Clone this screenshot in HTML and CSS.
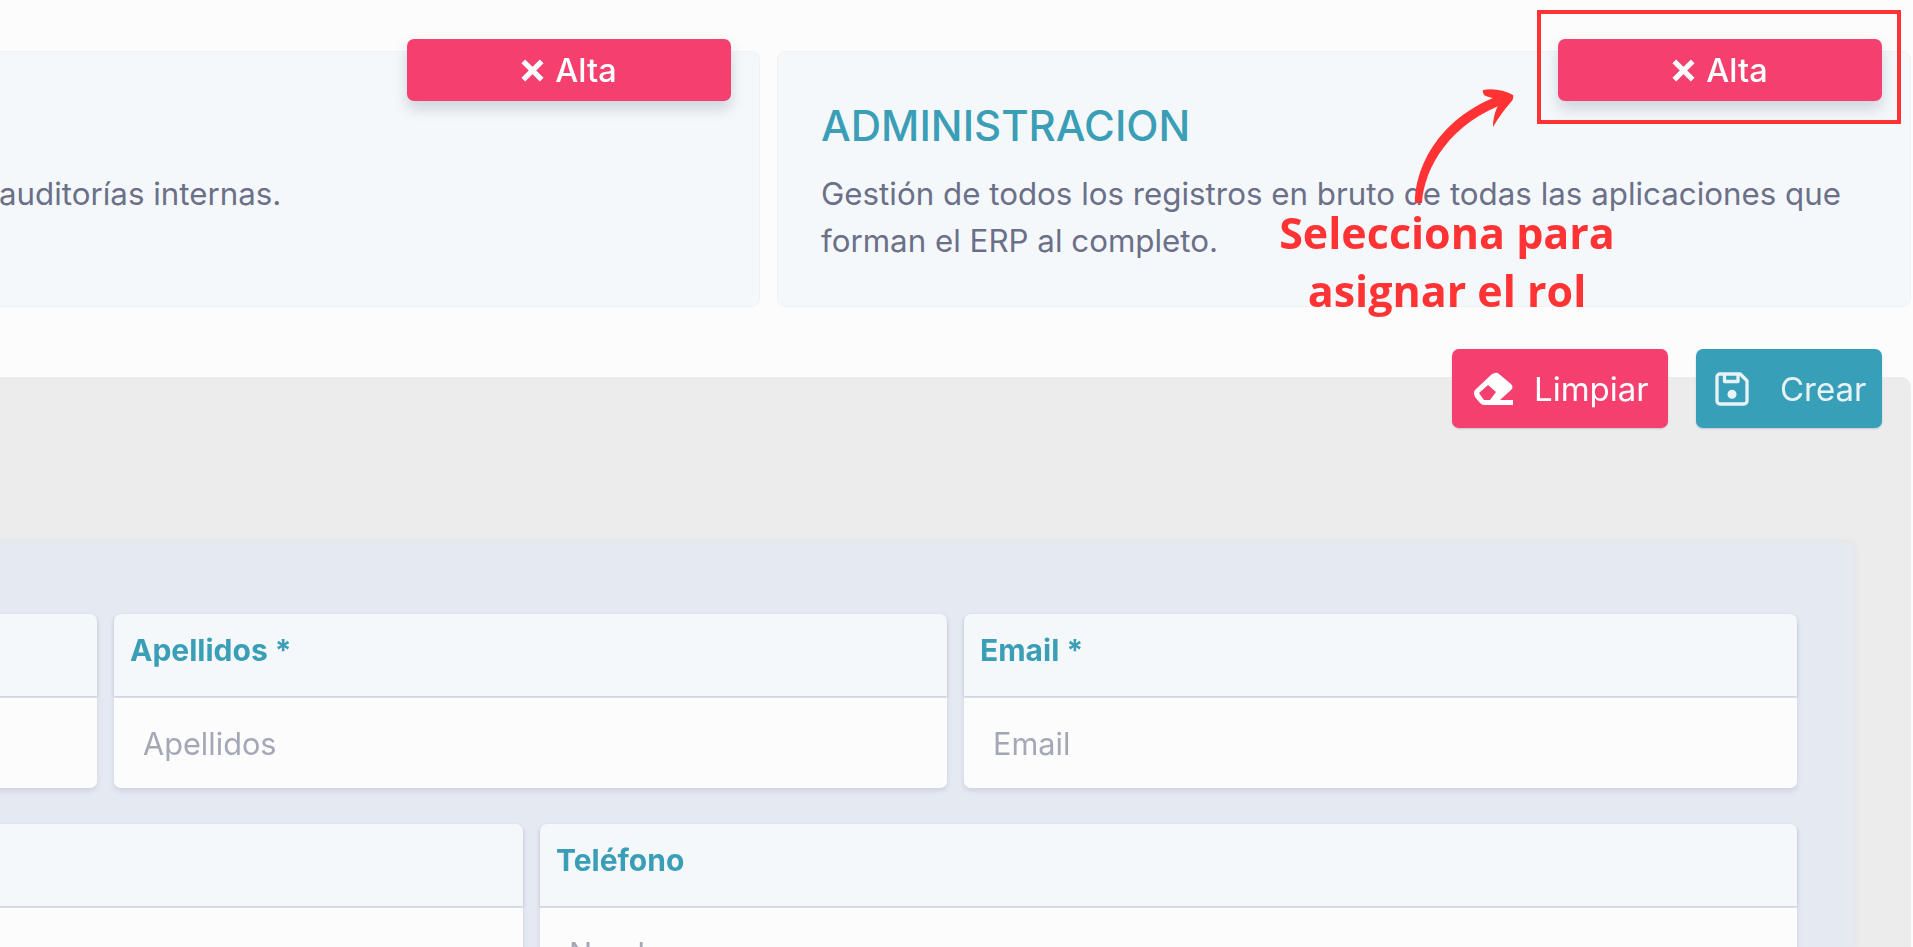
FILE: index.html
```html
<!DOCTYPE html>
<html lang="es">
<head>
<meta charset="utf-8">
<title>Alta de usuario</title>
<link rel="stylesheet" href="styles.css">
</head>
<body>
<div class="app">
  <section class="roles">
    <article class="role role-left">
      <button class="btn-alta" type="button"><svg class="x" viewBox="0 0 20 20"><path d="M2 2 18 18M18 2 2 18"/></svg><span>Alta</span></button>
      <h2 class="role-title">&nbsp;</h2>
      <p class="role-text">auditorías internas.</p>
    </article>
    <article class="role role-right">
      <button class="btn-alta" type="button"><svg class="x" viewBox="0 0 20 20"><path d="M2 2 18 18M18 2 2 18"/></svg><span>Alta</span></button>
      <h2 class="role-title">ADMINISTRACION</h2>
      <p class="role-text">Gestión de todos los registros en bruto de todas las aplicaciones que forman el ERP al completo.</p>
    </article>
  </section>
  <section class="panel">
    <div class="actions">
      <button class="btn btn-pink" type="button">
        <svg class="ico-eraser" viewBox="0 0 40 33"><path fill="#fff" fill-rule="evenodd" d="M22 1Q24 0 26 2L38 12Q41 15 38 18L27 28H40V33H11Q9 33 7 31L2 25Q0 21 2 18L19 2ZM6 21 15 13 23 20 17 28H11Z"/></svg>
        <span>Limpiar</span>
      </button>
      <button class="btn btn-teal" type="button">
        <svg class="ico-save" viewBox="0 0 24 24"><g fill="none" stroke="#e9f3f7" stroke-width="2.200" stroke-linejoin="round"><path d="M4 2h13.500L22 6.500V20a2 2 0 0 1-2 2H4a2 2 0 0 1-2-2V4a2 2 0 0 1 2-2Z"/><path d="M7 2.500v4.500h9V2.500"/></g><circle cx="12" cy="15.500" r="3" fill="#e9f3f7"/></svg>
        <span>Crear</span>
      </button>
    </div>
    <form class="form">
      <div class="row row-top">
        <div class="field">
          <div class="field-head">&nbsp;</div>
          <div class="field-body">&nbsp;</div>
        </div>
        <div class="field">
          <div class="field-head">Apellidos *</div>
          <div class="field-body">Apellidos</div>
        </div>
        <div class="field">
          <div class="field-head">Email *</div>
          <div class="field-body">Email</div>
        </div>
      </div>
      <div class="row row-bottom">
        <div class="field">
          <div class="field-head">&nbsp;</div>
          <div class="field-body">&nbsp;</div>
        </div>
        <div class="field">
          <div class="field-head">Teléfono</div>
          <div class="field-body">Nombre</div>
        </div>
      </div>
    </form>
  </section>
</div>
<div class="frame"></div>
<svg class="arrow" viewBox="0 0 130 130">
  <path fill="#ff3333" d="M15 123C15 86 40 35 106 13L109 22C50 42 24 88 22 123Z"/>
  <path fill="#ff3333" d="M83 10C93 8 104 10 113 15Q114 19 111 22C104 30 98 38 93 47C93 37 96 28 101 20C95 18 89 18 84 15Q82 12 83 10Z"/>
</svg>
<p class="note">Selecciona para<br>asignar el rol</p>
</body>
</html>
```
FILE: styles.css
```css
* { box-sizing: border-box; }
html, body { margin: 0; height: 100%; }
body {
  width: 1913px;
  height: 947px;
  overflow: hidden;
  background: #fcfcfc;
  font-family: Inter, "Liberation Sans", sans-serif;
  position: relative;
}
.app { filter: blur(0.7px); }
.roles {
  display: flex;
  gap: 17px;
  padding: 51px 2px 0 0;
  height: 377px;
}
.role {
  position: relative;
  height: 256px;
  background: #f5f8fb;
  border: 1px solid #f0f1f3;
  border-radius: 8px;
}
.role-left { width: 780px; margin-left: -20px; padding: 0 0 0 18px; }
.role-right { flex: 1; padding: 0 0 0 43px; }
.btn-alta {
  position: absolute;
  top: -13px;
  right: 28px;
  width: 324px;
  height: 62px;
  padding: 0;
  display: flex;
  align-items: center;
  justify-content: center;
  gap: 11px;
  border: 0;
  border-radius: 7px;
  background: #f5406f;
  color: #fff;
  font: 500 32.500px Inter, "Liberation Sans", sans-serif;
  box-shadow: 0 8px 14px rgba(70, 90, 120, .22);
}
.x {
  width: 23px;
  height: 23px;
  fill: none;
  stroke: #fff;
  stroke-width: 4.500;
}
.role-title {
  margin: 50px 0 0;
  font-size: 42px;
  line-height: 48px;
  font-weight: 500;
  color: #3a9eb7;
}
.role-text {
  margin: 21px 0 0;
  font-size: 31.300px;
  line-height: 47px;
  color: #6b7088;
}
.panel {
  margin: 0 2px 0 -20px;
  height: 570px;
  background: #ececec;
  border-radius: 10px 10px 0 0;
  position: relative;
}
.actions {
  position: absolute;
  top: -28px;
  right: 29px;
  display: flex;
  gap: 28px;
}
.btn {
  display: flex;
  align-items: center;
  height: 79px;
  border: 0;
  border-radius: 7px;
  color: #fff;
  font: 400 33px Inter, "Liberation Sans", sans-serif;
  box-shadow: 0 1px 2px rgba(70, 90, 120, .25);
}
.btn-pink { width: 216px; background: #f5406f; gap: 21px; padding: 0 0 0 21px; }
.btn-teal { width: 186px; background: #389fb8; gap: 30px; padding: 0 0 0 18px; color: #e9f3f7; }
.ico-eraser { width: 40px; height: 33px; flex: none; }
.ico-save { width: 36px; height: 36px; flex: none; }
.form {
  position: absolute;
  top: 165px;
  left: 0;
  width: 1875px;
  bottom: 0;
  overflow: hidden;
  padding: 72px 58px 0 0;
  background: #e5e9f2;
  border-radius: 0 8px 0 0;
  box-shadow: 0 0 6px rgba(0, 0, 0, .06);
}
.row { display: grid; gap: 17px; }
.row-top { grid-template-columns: 117px 833px 833px; margin-bottom: 36px; }
.row-bottom { grid-template-columns: 543px 1257px; }
.field {
  border-radius: 7px;
  box-shadow: 0 3px 5px rgba(90, 100, 120, .16);
}
.field-head {
  height: 82px;
  padding: 0 16px 10px;
  display: flex;
  align-items: center;
  background: #f5f8fb;
  color: #3a9eb7;
  font-size: 30px;
  font-weight: 700;
  border-radius: 7px 7px 0 0;
  box-shadow: 0 1px 3px rgba(90, 100, 120, .22);
}
.field-body {
  height: 90px;
  margin-top: 2px;
  padding: 0 29px;
  display: flex;
  align-items: center;
  background: #fcfcfc;
  color: #a4a8b6;
  font-size: 30.700px;
  border-radius: 0 0 7px 7px;
}
.frame {
  position: absolute;
  left: 1537px;
  top: 10px;
  width: 364px;
  height: 114px;
  border: 4px solid #ff3333;
}
.arrow {
  position: absolute;
  left: 1400px;
  top: 80px;
  width: 130px;
  height: 130px;
}
.note {
  position: absolute;
  left: 1247px;
  top: 204px;
  width: 400px;
  margin: 0;
  text-align: center;
  color: #ff3333;
  font: 700 43px/58px "Open Sans", sans-serif;
}
```
